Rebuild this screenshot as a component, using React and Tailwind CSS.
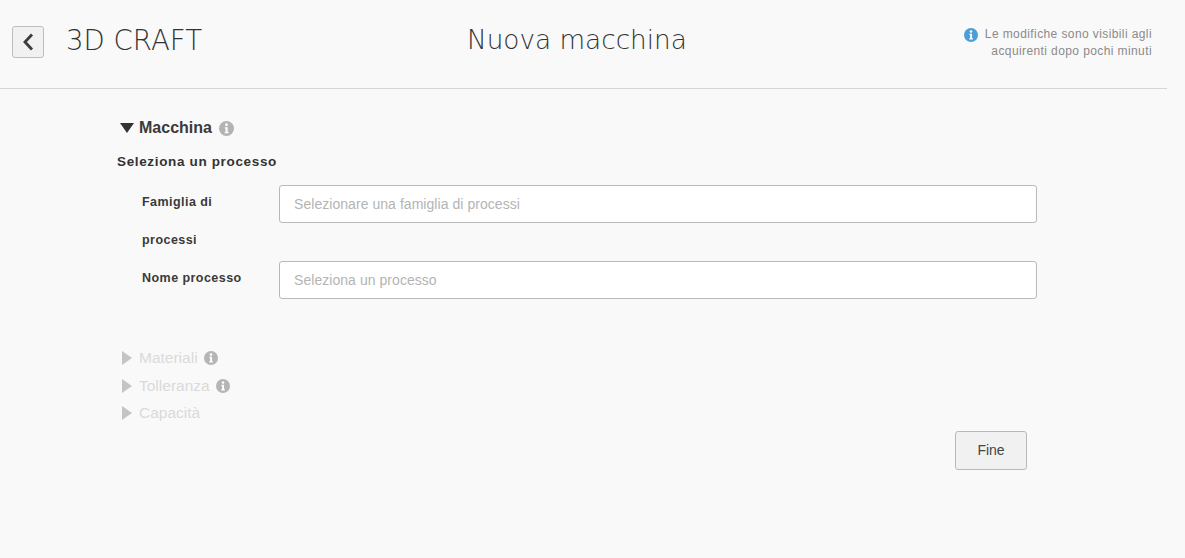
import React from "react";

const InfoIcon = ({ color = "#b3b3b3", size = 15 }) => (
  <svg width={size} height={size} viewBox="0 0 16 16" className="shrink-0">
    <circle cx="8" cy="8" r="8" fill={color} />
    <circle cx="8" cy="4" r="1.5" fill="#fff" />
    <path d="M6.2 6.6h3v5.2h1v1.3H6v-1.3h1V7.9h-.8z" fill="#fff" />
  </svg>
);

const Collapsed = ({ label, info }) => (
  <div className="flex items-center h-[20px] pl-[5px]">
    <svg width="10" height="14" viewBox="0 0 10 14" className="shrink-0">
      <path d="M0 0l10 7-10 7z" fill="#c4c4c4" />
    </svg>
    <span className="ml-[7px] text-[15.5px] text-[#dadada]">{label}</span>
    {info && (
      <span className="ml-[6px]">
        <InfoIcon color="#b5b5b5" size={14} />
      </span>
    )}
  </div>
);

const Field = ({ label, placeholder }) => (
  <div className="flex items-start">
    <label className="w-[162px] pt-px -mb-px pl-[25px] pr-[20px] text-[12.5px] font-bold leading-[38px] tracking-[0.45px] text-[#3a3a3a]">
      {label}
    </label>
    <input
      type="text"
      readOnly
      placeholder={placeholder}
      className="mt-[3px] w-[758px] h-[38px] px-[14px] bg-white border border-[#b9b9b9] rounded-[3px] text-[14px] tracking-[0.05px] outline-none placeholder:text-[#b4b4b4]"
    />
  </div>
);

export default function App() {
  return (
    <div className="min-h-[558px] bg-[#f9f9f9] font-['Liberation_Sans',Arial,sans-serif]">
      <div className="w-[1167px]">
        <header className="relative flex items-center h-[89px] border-b border-[#d6d6d6] pl-[12px] pr-[15px]">
          <button className="flex items-center justify-center w-[32px] h-[32px] mt-[-5px] bg-[#f1f1f1] border border-[#bdbdbd] rounded-[3px]">
            <svg width="12" height="18" viewBox="0 0 12 18">
              <path d="M10 1.5L3 9l7 7.5" fill="none" stroke="#3c3c3c" strokeWidth="2.8" />
            </svg>
          </button>
          <span className="ml-[22px] mt-[-7px] text-[27.6px] font-extralight text-[#333] font-['DejaVu_Sans',sans-serif]">
            3D CRAFT
          </span>
          <h1 className="absolute left-[467px] top-[21px] text-[26.3px] font-extralight text-[#333] font-['DejaVu_Sans',sans-serif]">
            Nuova macchina
          </h1>
          <div className="ml-auto mt-[-3px] flex items-start">
            <span className="mt-[2px] mr-[7px]">
              <InfoIcon color="#4a9fd8" size={14} />
            </span>
            <p className="text-right text-[12px] leading-[17px] tracking-[0.4px] text-[#8a8a8a]">
              Le modifiche sono visibili agli
              <br />
              acquirenti dopo pochi minuti
            </p>
          </div>
        </header>

        <main className="pl-[117px]">
          <div className="flex items-center h-[20px] mt-[29px] pl-[3px]">
            <svg width="14" height="10" viewBox="0 0 14 10" className="shrink-0">
              <path d="M0 0h14L7 10z" fill="#333" />
            </svg>
            <span className="ml-[5px] text-[16px] font-bold text-[#3a3a3a]">Macchina</span>
            <span className="ml-[7px]">
              <InfoIcon />
            </span>
          </div>
          <h2 className="mt-[15px] text-[13.5px] font-bold tracking-[0.65px] leading-[18px] text-[#333]">
            Seleziona un processo
          </h2>
          <div className="mt-[11px] flex flex-col">
            <Field label="Famiglia di processi" placeholder="Selezionare una famiglia di processi" />
            <Field label="Nome processo" placeholder="Seleziona un processo" />
          </div>
          <div className="mt-[49px] flex flex-col gap-[7.5px]">
            <Collapsed label="Materiali" info />
            <Collapsed label="Tolleranza" info />
            <Collapsed label="Capacità" />
          </div>
          <div className="w-[910px] flex justify-end mt-[8px]">
            <button className="w-[72px] h-[39px] bg-[#f1f1f1] border border-[#b9b9b9] rounded-[3px] text-[14px] text-[#444]">
              Fine
            </button>
          </div>
        </main>
      </div>
    </div>
  );
}
